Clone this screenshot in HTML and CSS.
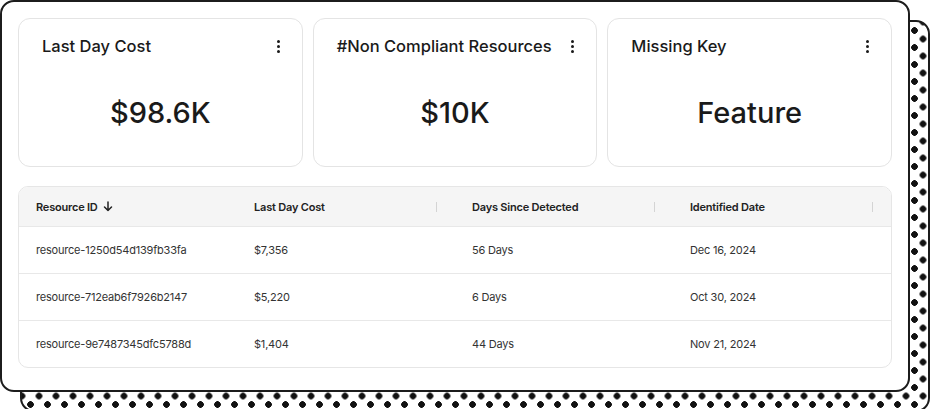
FILE: index.html
```html
<!DOCTYPE html>
<html>
<head>
    <meta charset="UTF-8">
    <meta name="viewport" content="width=device-width, initial-scale=1.0">
    <title>Resources</title>
    <link rel="stylesheet" href="styles.css">
</head>
<body>
    <div class="frame">
        <div class="panel">
            <div class="cards">
                <div class="card">
                    <div class="card-head">
                        <span class="card-title">Last Day Cost</span>
                        <span class="kebab"><i></i><i></i><i></i></span>
                    </div>
                    <div class="card-value">$98.6K</div>
                </div>
                <div class="card">
                    <div class="card-head">
                        <span class="card-title">#Non Compliant Resources</span>
                        <span class="kebab"><i></i><i></i><i></i></span>
                    </div>
                    <div class="card-value">$10K</div>
                </div>
                <div class="card">
                    <div class="card-head">
                        <span class="card-title">Missing Key</span>
                        <span class="kebab"><i></i><i></i><i></i></span>
                    </div>
                    <div class="card-value">Feature</div>
                </div>
            </div>

            <div class="table-wrap">
                <table class="res-table">
                    <thead>
                        <tr>
                            <th>Resource ID
                                <svg class="sort-icon" width="10" height="11" viewBox="0 0 10 11">
                                    <path d="M5 1v8.5M1.5 6L5 9.5 8.5 6" fill="none" stroke="#222" stroke-width="1.5" stroke-linecap="round" stroke-linejoin="round"/>
                                </svg>
                            </th>
                            <th class="sep">Last Day Cost</th>
                            <th class="sep">Days Since Detected</th>
                            <th class="sep">Identified Date</th>
                        </tr>
                    </thead>
                    <tbody>
                        <tr>
                            <td>resource-1250d54d139fb33fa</td>
                            <td>$7,356</td>
                            <td>56 Days</td>
                            <td>Dec 16, 2024</td>
                        </tr>
                        <tr>
                            <td>resource-712eab6f7926b2147</td>
                            <td>$5,220</td>
                            <td>6 Days</td>
                            <td>Oct 30, 2024</td>
                        </tr>
                        <tr>
                            <td>resource-9e7487345dfc5788d</td>
                            <td>$1,404</td>
                            <td>44 Days</td>
                            <td>Nov 21, 2024</td>
                        </tr>
                    </tbody>
                </table>
            </div>
        </div>
    </div>
</body>
</html>
```

FILE: styles.css
```css
body {
    margin: 0;
    padding: 0;
    background-color: #fff;
    font-family: Inter, "Open Sans", sans-serif;
    color: #1a1a1a;
    overflow: hidden;
}

.frame {
    position: relative;
    width: 930px;
    height: 409px;
}

/* dotted offset backdrop */
.frame::before {
    content: "";
    position: absolute;
    left: 20px;
    top: 20px;
    width: 910px;
    height: 392px;
    box-sizing: border-box;
    border: 2px solid #1c1c1c;
    border-radius: 14px;
    background-color: #fff;
    background-image:
        radial-gradient(circle, #111 3px, transparent 3.6px),
        radial-gradient(circle, #111 3px, transparent 3.6px);
    background-size: 17px 17px, 17px 17px;
    background-position: 0 0, 8.5px 8.5px;
}

.panel {
    position: relative;
    box-sizing: border-box;
    width: 910px;
    height: 392px;
    background-color: #fff;
    border: 2px solid #1c1c1c;
    border-radius: 14px;
    padding: 16px 16px 0 16px;
}

.cards {
    display: grid;
    grid-template-columns: repeat(3, 1fr);
    gap: 10px;
}

.card {
    box-sizing: border-box;
    height: 149px;
    border: 1px solid #e4e4e4;
    border-radius: 12px;
    display: flex;
    flex-direction: column;
    padding: 15px 18px 0 23px;
}

.card-head {
    display: flex;
    align-items: center;
    justify-content: space-between;
    height: 24px;
}

.card-title {
    font-size: 16.5px;
    font-weight: 500;
    color: #1a1a1a;
    white-space: nowrap;
}

.kebab {
    display: flex;
    flex-direction: column;
    gap: 2px;
    padding: 0 4px;
}

.kebab i {
    display: block;
    width: 3px;
    height: 3px;
    border-radius: 50%;
    background-color: #1a1a1a;
}

.card-value {
    flex-grow: 1;
    display: flex;
    align-items: center;
    justify-content: center;
    font-size: 29px;
    font-weight: 500;
    color: #1a1a1a;
    padding-right: 5px;
}

.table-wrap {
    margin-top: 19px;
    border: 1px solid #e6e6e6;
    border-radius: 10px;
    overflow: hidden;
}

.res-table {
    width: 100%;
    border-collapse: collapse;
    table-layout: fixed;
    font-size: 11px;
    letter-spacing: -0.2px;
}

.res-table th {
    position: relative;
    height: 39px;
    background-color: #f5f5f5;
    text-align: left;
    font-weight: 600;
    color: #222;
    padding: 0 17px;
}

.res-table th.sep::after {
    content: "";
    position: absolute;
    right: 18px;
    top: 15px;
    width: 1px;
    height: 10px;
    background-color: #d4d4d4;
}

.sort-icon {
    vertical-align: -1px;
    margin-left: 3px;
}

.res-table td {
    height: 46px;
    padding: 0 17px;
    border-top: 1px solid #e8e8e8;
    color: #333;
}
```
